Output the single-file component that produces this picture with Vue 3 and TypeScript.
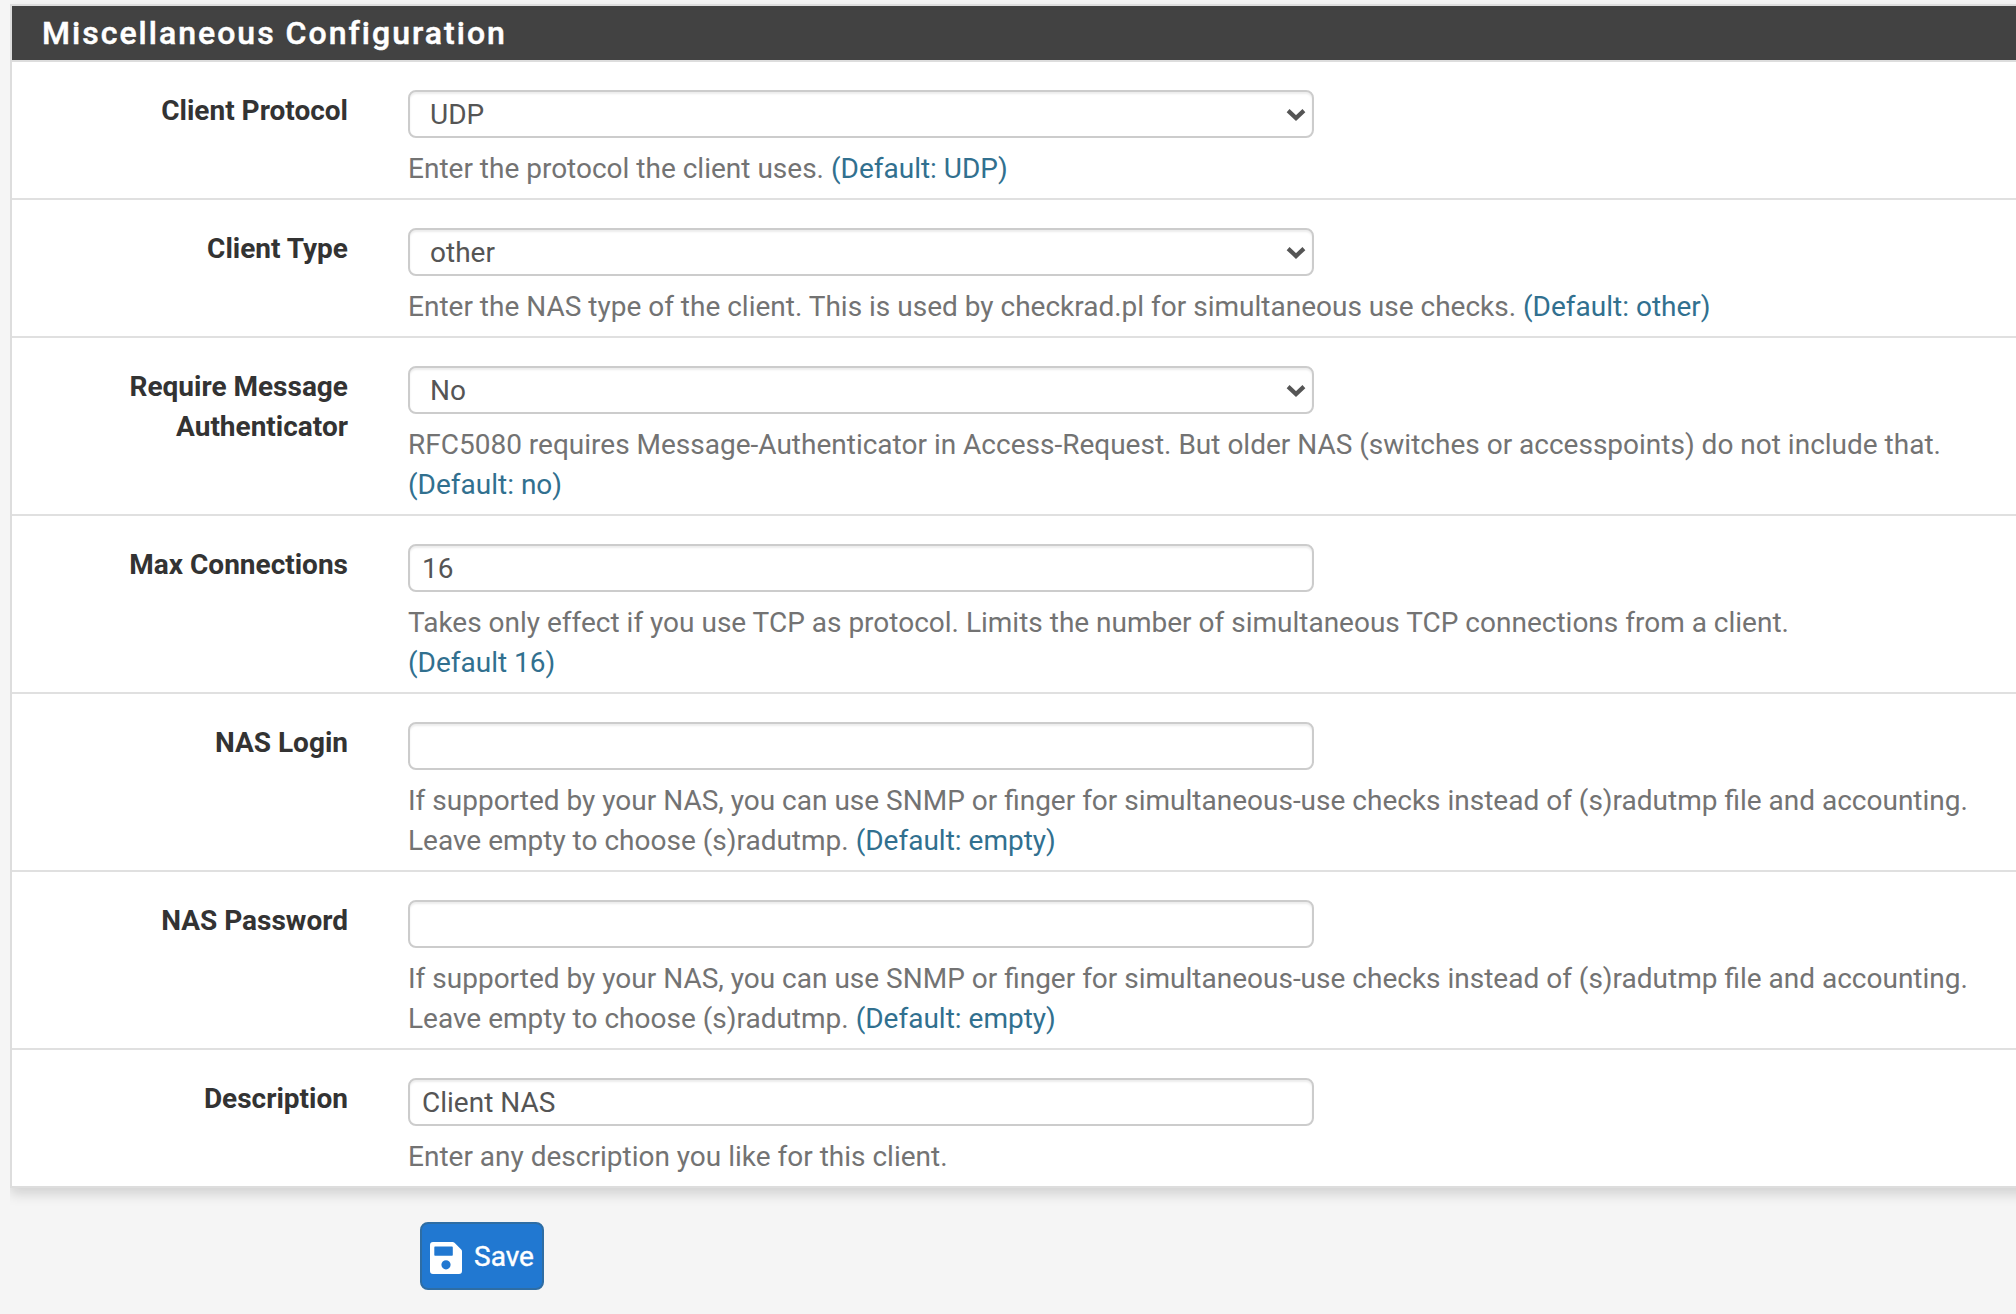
<script setup lang="ts">
import { reactive } from 'vue'

interface Field {
  id: string
  label: string
  kind: 'select' | 'text' | 'password'
  options?: string[]
  help: string[]
  hint?: string
}

const nasHelp = [
  'If supported by your NAS, you can use SNMP or finger for simultaneous-use checks instead of (s)radutmp file and accounting.',
  'Leave empty to choose (s)radutmp.',
]

const fields: Field[] = [
  { id: 'proto', label: 'Client Protocol', kind: 'select', options: ['UDP', 'TCP'], help: ['Enter the protocol the client uses.'], hint: '(Default: UDP)' },
  { id: 'nastype', label: 'Client Type', kind: 'select', options: ['other', 'cisco'], help: ['Enter the NAS type of the client. This is used by checkrad.pl for simultaneous use checks.'], hint: '(Default: other)' },
  { id: 'msgauth', label: 'Require Message Authenticator', kind: 'select', options: ['No', 'Yes'], help: ['RFC5080 requires Message-Authenticator in Access-Request. But older NAS (switches or accesspoints) do not include that.', ''], hint: '(Default: no)' },
  { id: 'maxconn', label: 'Max Connections', kind: 'text', help: ['Takes only effect if you use TCP as protocol. Limits the number of simultaneous TCP connections from a client.', ''], hint: '(Default 16)' },
  { id: 'login', label: 'NAS Login', kind: 'text', help: nasHelp, hint: '(Default: empty)' },
  { id: 'password', label: 'NAS Password', kind: 'password', help: nasHelp, hint: '(Default: empty)' },
  { id: 'descr', label: 'Description', kind: 'text', help: ['Enter any description you like for this client.'] },
]

const values = reactive<Record<string, string>>({
  proto: 'UDP',
  nastype: 'other',
  msgauth: 'No',
  maxconn: '16',
  login: '',
  password: '',
  descr: 'Client NAS',
})
</script>

<template>
  <form class="page" @submit.prevent>
    <section class="panel">
      <h2 class="heading">Miscellaneous Configuration</h2>
      <div v-for="f in fields" :key="f.id" class="row">
        <label class="label" :for="f.id">{{ f.label }}</label>
        <div class="body">
          <div class="control">
            <select v-if="f.kind === 'select'" :id="f.id" v-model="values[f.id]" class="input select">
              <option v-for="o in f.options" :key="o">{{ o }}</option>
            </select>
            <input v-else :id="f.id" v-model="values[f.id]" :type="f.kind" class="input" />
            <svg v-if="f.kind === 'select'" class="chevron" viewBox="0 0 20 14" width="20" height="14">
              <path d="M2.1 2.6 10 10 17.9 2.6" fill="none" stroke="#555" stroke-width="4.2" />
            </svg>
          </div>
          <div class="help">
            <div v-for="(line, i) in f.help" :key="i">
              {{ line }}
              <span v-if="f.hint && i === f.help.length - 1" class="hint">{{ f.hint }}</span>
            </div>
          </div>
        </div>
      </div>
    </section>
    <button class="save" type="submit">
      <svg viewBox="0 0 32 32" width="32" height="32">
        <path
          fill="#fff"
          fill-rule="evenodd"
          d="M3 0H22.6Q23.7 0 24.5.8L31.2 7.5Q32 8.3 32 9.4V29Q32 32 29 32H3Q0 32 0 29V3Q0 0 3 0ZM5 4.6Q4.3 4.6 4.3 5.4V13Q4.3 13.8 5 13.8H22Q22.8 13.8 22.8 13V5.4Q22.8 4.6 22 4.6ZM16 18.2A4.6 4.6 0 1 0 16 27.4 4.6 4.6 0 1 0 16 18.2Z"
        />
      </svg>
      <span>Save</span>
    </button>
  </form>
</template>

<style>
body {
  background: #f5f5f5;
  overflow: hidden;
}
</style>

<style scoped>
.page {
  box-sizing: border-box;
  height: 1314px;
  overflow: hidden;
  padding: 4px 0 0 10px;
  font: 28px/40px Roboto, "Liberation Sans", sans-serif;
}
.panel {
  box-sizing: border-box;
  width: 2060px;
  border: 2px solid #ddd;
  background: #fff;
  box-shadow: 0 6px 12px rgba(0, 0, 0, 0.15);
  clip-path: inset(-20px 0 -40px 0);
}
.heading {
  box-sizing: border-box;
  height: 56px;
  margin: 0;
  padding: 1px 30px 0;
  border-bottom: 2px solid #ddd;
  background: #424242;
  color: #fff;
  font-size: 32px;
  font-weight: 500;
  line-height: 52px;
  letter-spacing: 2.02px;
  -webkit-text-stroke: 0.5px #fff;
}
.row {
  display: flex;
  padding: 28px 0 10px;
  border-bottom: 2px solid #e0e0e0;
}
.row:last-child {
  border-bottom: 0;
}
.label {
  flex: none;
  width: 236px;
  margin: 1px 60px -1px 100px;
  color: #333;
  font-weight: 700;
  text-align: right;
}
.body {
  flex: none;
  width: 1584px;
}
.control {
  position: relative;
  width: 906px;
}
.input {
  display: block;
  box-sizing: border-box;
  width: 100%;
  height: 48px;
  margin: 0;
  padding: 0 12px;
  border: 2px solid #ccc;
  border-radius: 8px;
  outline: 0;
  background: #fff;
  box-shadow: inset 0 2px 2px rgba(0, 0, 0, 0.075);
  color: #555;
  font: inherit;
}
.select {
  padding: 2px 20px 0;
  appearance: none;
}
.chevron {
  position: absolute;
  top: 18px;
  right: 8px;
  pointer-events: none;
}
.help {
  margin: 11px 0 -1px;
  color: #737373;
}
.hint {
  color: #31708f;
}
.save {
  display: flex;
  align-items: center;
  gap: 12px;
  box-sizing: border-box;
  width: 124px;
  height: 68px;
  margin: 34px 0 0 410px;
  padding: 4px 8px 0;
  border: 2px solid #2e6da4;
  border-radius: 8px;
  background: #2178d1;
  color: #fff;
  font: inherit;
}
.save svg {
  flex: none;
}
.save span {
  margin-top: -2px;
  -webkit-text-stroke: 0.4px #fff;
}
</style>
